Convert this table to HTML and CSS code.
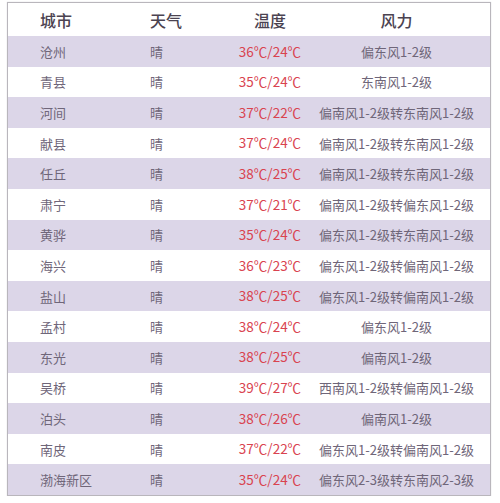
FILE: index.html
```html
<!DOCTYPE html>
<html lang="zh-CN">
<head>
<meta charset="utf-8">
<title>天气</title>
<link rel="stylesheet" href="styles.css">
</head>
<body>
<div class="table">
  <div class="row head"><span class="c1">城市</span><span class="c2">天气</span><span class="c3">温度</span><span class="c4">风力</span></div>
  <div class="row alt"><span class="c1">沧州</span><span class="c2">晴</span><span class="c3 t">36℃/24℃</span><span class="c4">偏东风1-2级</span></div>
  <div class="row"><span class="c1">青县</span><span class="c2">晴</span><span class="c3 t">35℃/24℃</span><span class="c4">东南风1-2级</span></div>
  <div class="row alt"><span class="c1">河间</span><span class="c2">晴</span><span class="c3 t">37℃/22℃</span><span class="c4">偏南风1-2级转东南风1-2级</span></div>
  <div class="row"><span class="c1">献县</span><span class="c2">晴</span><span class="c3 t">37℃/24℃</span><span class="c4">偏南风1-2级转东南风1-2级</span></div>
  <div class="row alt"><span class="c1">任丘</span><span class="c2">晴</span><span class="c3 t">38℃/25℃</span><span class="c4">偏南风1-2级转东南风1-2级</span></div>
  <div class="row"><span class="c1">肃宁</span><span class="c2">晴</span><span class="c3 t">37℃/21℃</span><span class="c4">偏南风1-2级转偏东风1-2级</span></div>
  <div class="row alt"><span class="c1">黄骅</span><span class="c2">晴</span><span class="c3 t">35℃/24℃</span><span class="c4">偏东风1-2级转东南风1-2级</span></div>
  <div class="row"><span class="c1">海兴</span><span class="c2">晴</span><span class="c3 t">36℃/23℃</span><span class="c4">偏东风1-2级转偏南风1-2级</span></div>
  <div class="row alt"><span class="c1">盐山</span><span class="c2">晴</span><span class="c3 t">38℃/25℃</span><span class="c4">偏东风1-2级转偏南风1-2级</span></div>
  <div class="row"><span class="c1">孟村</span><span class="c2">晴</span><span class="c3 t">38℃/24℃</span><span class="c4">偏东风1-2级</span></div>
  <div class="row alt"><span class="c1">东光</span><span class="c2">晴</span><span class="c3 t">38℃/25℃</span><span class="c4">偏南风1-2级</span></div>
  <div class="row"><span class="c1">吴桥</span><span class="c2">晴</span><span class="c3 t">39℃/27℃</span><span class="c4">西南风1-2级转偏南风1-2级</span></div>
  <div class="row alt"><span class="c1">泊头</span><span class="c2">晴</span><span class="c3 t">38℃/26℃</span><span class="c4">偏南风1-2级</span></div>
  <div class="row"><span class="c1">南皮</span><span class="c2">晴</span><span class="c3 t">37℃/22℃</span><span class="c4">偏东风1-2级转偏南风1-2级</span></div>
  <div class="row alt"><span class="c1">渤海新区</span><span class="c2">晴</span><span class="c3 t">35℃/24℃</span><span class="c4">偏东风2-3级转东南风2-3级</span></div>
</div>
</body>
</html>
```
FILE: styles.css
```css
html, body {
  margin: 0;
  padding: 0;
  background: #ffffff;
}
body {
  padding: 2px 10px 0 7px;
  font-family: "Noto Sans CJK SC", "Noto Sans", sans-serif;
  color: #6f6679;
}
.table {
  width: 482px;
  border: 1px solid #b9b6bc;
  box-shadow: 0 0 1px #d0ced2;
  background: #ffffff;
}
.row {
  display: grid;
  grid-template-columns: 132px 90px 80px 1fr;
  align-items: center;
  height: 30.6px;
  font-size: 13px;
  line-height: 1;
  white-space: nowrap;
}
.row.head {
  height: 33px;
  font-size: 16px;
  font-weight: 500;
  color: #4b4351;
}
.row.alt {
  background: #dcd6e8;
}
.c1 {
  padding-left: 32px;
}
.c2 {
  padding-left: 10px;
}
.c3 {
  text-align: center;
}
.t {
  font-size: 13.5px;
  color: #d9434f;
}
.c4 {
  text-align: center;
  padding-right: 7px;
}
```
